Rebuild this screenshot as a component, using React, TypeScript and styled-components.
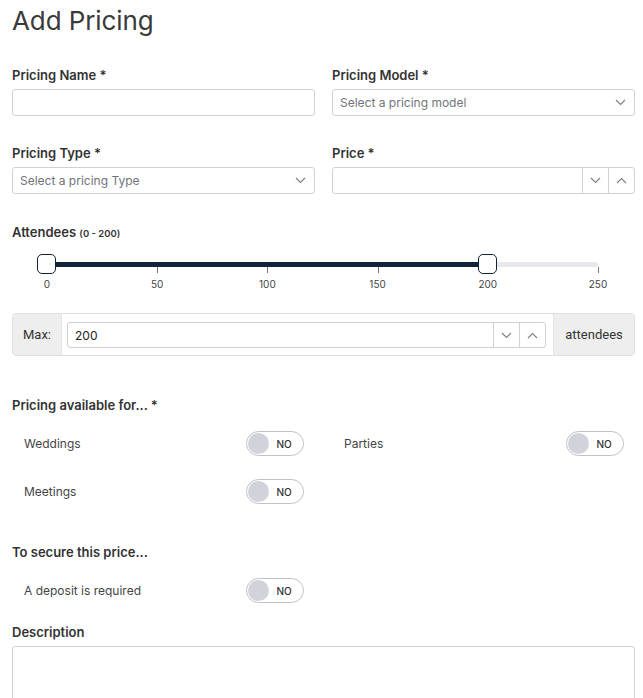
import React, { FC } from "react";
import styled, { createGlobalStyle } from "styled-components";

const GlobalStyle = createGlobalStyle`
    body {
        margin: 0;
        background: #fff;
        font-family: Inter, "Noto Sans", "Liberation Sans", sans-serif;
        color: #333;
    }
    * {
        box-sizing: border-box;
    }
`;

const Page = styled.div`
    padding: 4px 8px 0 12px;
`;

const Title = styled.h1`
    margin: 0;
    font-size: 26px;
    line-height: 34px;
    font-weight: 400;
    color: #3a3a3a;
    letter-spacing: -0.1px;
`;

const FieldGrid = styled.div`
    display: grid;
    grid-template-columns: 1fr 1fr;
    column-gap: 17px;
    row-gap: 29px;
    margin-top: 29px;
`;

const Field = styled.div`
    display: flex;
    flex-direction: column;
    gap: 6px;
`;

const Label = styled.div<{ $gap?: number }>`
    font-size: 13px;
    line-height: 16px;
    font-weight: 600;
    color: #333;
    margin-top: ${(p) => p.$gap ?? 0}px;
    & small {
        font-size: 9.5px;
        font-weight: 600;
    }
`;

const Box = styled.div<{ $h?: number }>`
    height: ${(p) => p.$h ?? 27}px;
    border: 1px solid #ced2d8;
    border-radius: 3px;
    background: #fff;
    display: flex;
    align-items: stretch;
    font-size: 12px;
    color: #222;
`;

const BoxText = styled.div<{ $placeholder?: boolean }>`
    flex: 1;
    display: flex;
    align-items: center;
    padding: 0 7px;
    color: ${(p) => (p.$placeholder ? "#70747a" : "#222")};
    font-size: 12px;
`;

const Caret = styled.div`
    width: 28px;
    display: flex;
    align-items: center;
    justify-content: center;
`;

const SpinButton = styled.div`
    width: 26px;
    border-left: 1px solid #ced2d8;
    display: flex;
    align-items: center;
    justify-content: center;
`;

const Chevron: FC<{ up?: boolean }> = ({ up }) => (
    <svg width="11" height="7" viewBox="0 0 11 7">
        <path
            d={up ? "M1 6 L5.5 1.5 L10 6" : "M1 1 L5.5 5.5 L10 1"}
            fill="none"
            stroke="#7a7f86"
            strokeWidth="1.1"
        />
    </svg>
);

const Select: FC<{ placeholder: string }> = ({ placeholder }) => (
    <Box>
        <BoxText $placeholder>{placeholder}</BoxText>
        <Caret>
            <Chevron />
        </Caret>
    </Box>
);

const NumberBox: FC<{ value?: string; height?: number }> = ({ value, height }) => (
    <Box $h={height} style={{ flex: 1 }}>
        <BoxText>{value}</BoxText>
        <SpinButton>
            <Chevron />
        </SpinButton>
        <SpinButton>
            <Chevron up />
        </SpinButton>
    </Box>
);

/* range slider */
const SliderWrap = styled.div`
    position: relative;
    height: 40px;
    margin: 12px 37px 0 35px;
`;

const Track = styled.div`
    position: absolute;
    left: 0;
    right: 0;
    top: 8px;
    height: 5px;
    border-radius: 3px;
    background: #e6e8eb;
`;

const Fill = styled.div`
    position: absolute;
    top: 8px;
    height: 5px;
    background: #0f2437;
`;

const Handle = styled.div`
    position: absolute;
    top: 0;
    width: 19px;
    height: 20px;
    margin-left: -10px;
    border: 1.5px solid #0f2437;
    border-radius: 5px;
    background: #fff;
    z-index: 2;
`;

const Tick = styled.div`
    position: absolute;
    top: 13px;
    width: 1px;
    height: 6px;
    background: #777;
`;

const TickLabel = styled.div`
    position: absolute;
    top: 24px;
    transform: translateX(-50%);
    font-size: 10px;
    line-height: 12px;
    color: #444;
`;

const RangeSlider: FC<{ min: number; max: number; low: number; high: number; step: number }> = ({
    min,
    max,
    low,
    high,
    step,
}) => {
    const pct = (v: number) => ((v - min) / (max - min)) * 100;
    const ticks: number[] = [];
    for (let v = min; v <= max; v += step) ticks.push(v);
    return (
        <SliderWrap>
            <Track />
            <Fill style={{ left: `${pct(low)}%`, width: `${pct(high) - pct(low)}%` }} />
            {ticks.map((t) => (
                <React.Fragment key={t}>
                    <Tick style={{ left: `${pct(t)}%` }} />
                    <TickLabel style={{ left: `${pct(t)}%` }}>{t}</TickLabel>
                </React.Fragment>
            ))}
            <Handle style={{ left: `${pct(low)}%` }} />
            <Handle style={{ left: `${pct(high)}%` }} />
        </SliderWrap>
    );
};

/* input group with addons */
const Group = styled.div`
    margin-top: 19px;
    height: 43px;
    border: 1px solid #dcdfe3;
    border-radius: 4px;
    display: flex;
    overflow: hidden;
`;

const Addon = styled.div<{ $w: number }>`
    width: ${(p) => p.$w}px;
    background: #eeeeee;
    display: flex;
    align-items: center;
    justify-content: center;
    font-size: 13px;
    color: #333;
    font-family: Roboto, "Liberation Sans", sans-serif;
`;

const GroupBody = styled.div`
    flex: 1;
    padding: 8px 7px 8px 5px;
    display: flex;
    border-left: 1px solid #e3e5e8;
    border-right: 1px solid #e3e5e8;
    background: #fff;
`;

/* yes/no toggles */
const ToggleGrid = styled.div`
    display: grid;
    grid-template-columns: 1fr 1fr;
    column-gap: 17px;
    row-gap: 23px;
    margin-top: 18px;
`;

const ToggleRow = styled.div`
    display: flex;
    align-items: center;
    justify-content: space-between;
    padding: 0 11px 0 12px;
    height: 25px;
    font-size: 12px;
    color: #444;
`;

const Switch = styled.div`
    width: 58px;
    height: 25px;
    border: 1px solid #bfc2c6;
    border-radius: 13px;
    display: flex;
    align-items: center;
    padding: 0 0 0 1px;
    background: #fff;
`;

const Knob = styled.div`
    width: 21px;
    height: 21px;
    border-radius: 50%;
    background: #d0d4da;
`;

const SwitchText = styled.span`
    flex: 1;
    text-align: center;
    font-size: 10px;
    font-weight: 500;
    color: #333;
    padding-right: 4px;
`;

const Toggle: FC<{ label: string }> = ({ label }) => (
    <ToggleRow>
        <span>{label}</span>
        <Switch>
            <Knob />
            <SwitchText>NO</SwitchText>
        </Switch>
    </ToggleRow>
);

const TextArea = styled.div`
    margin-top: 6px;
    height: 90px;
    border: 1px solid #ced2d8;
    border-radius: 3px;
`;

export default function App() {
    return (
        <Page>
            <GlobalStyle />
            <Title>Add Pricing</Title>
            <FieldGrid>
                <Field>
                    <Label>Pricing Name *</Label>
                    <Box />
                </Field>
                <Field>
                    <Label>Pricing Model *</Label>
                    <Select placeholder="Select a pricing model" />
                </Field>
                <Field>
                    <Label>Pricing Type *</Label>
                    <Select placeholder="Select a pricing Type" />
                </Field>
                <Field>
                    <Label>Price *</Label>
                    <NumberBox />
                </Field>
            </FieldGrid>

            <Label $gap={30}>
                Attendees <small>(0 - 200)</small>
            </Label>
            <RangeSlider min={0} max={250} low={0} high={200} step={50} />

            <Group>
                <Addon $w={48}>Max:</Addon>
                <GroupBody>
                    <NumberBox value="200" height={26} />
                </GroupBody>
                <Addon $w={80}>attendees</Addon>
            </Group>

            <Label $gap={41}>Pricing available for... *</Label>
            <ToggleGrid>
                <Toggle label="Weddings" />
                <Toggle label="Parties" />
                <Toggle label="Meetings" />
            </ToggleGrid>

            <Label $gap={40}>To secure this price...</Label>
            <ToggleGrid>
                <Toggle label="A deposit is required" />
            </ToggleGrid>

            <Label $gap={21}>Description</Label>
            <TextArea />
        </Page>
    );
}
